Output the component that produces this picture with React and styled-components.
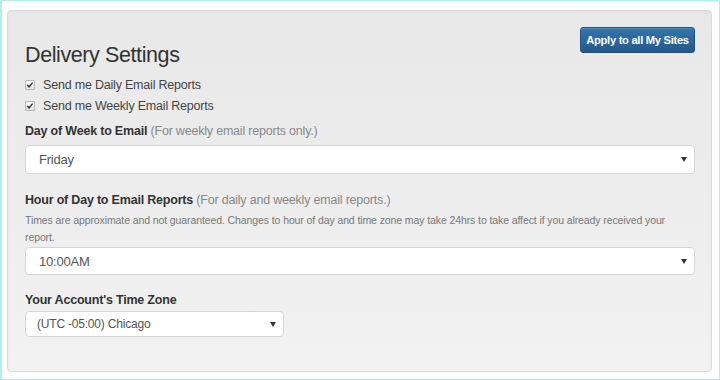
import React from "react";
import styled, { createGlobalStyle } from "styled-components";

const GlobalStyle = createGlobalStyle`
    html, body {
        margin: 0;
        padding: 0;
        background: #ffffff;
    }
    body {
        font-family: "Liberation Sans", Arial, Helvetica, sans-serif;
        color: #333333;
    }
`;

const Frame = styled.div`
    box-sizing: border-box;
    width: 720px;
    height: 380px;
    border: 1px solid #b6ecec;
    border-left-width: 2px;
    padding: 9px 7px 7px 5px;
    display: flex;
`;

const Panel = styled.div`
    box-sizing: border-box;
    flex: 1;
    border: 1px solid #dadada;
    border-radius: 4px;
    background: linear-gradient(to bottom, #e8e8e8 0%, #f2f2f2 100%);
    box-shadow: inset 0 1px 2px rgba(0, 0, 0, 0.04);
    padding: 16px 16px 0 17px;
    display: flex;
    flex-direction: column;
`;

const Header = styled.div`
    display: flex;
    justify-content: space-between;
    align-items: flex-start;
`;

const Title = styled.h3`
    margin: 16px 0 0 0;
    font-size: 21.5px;
    font-weight: 400;
    letter-spacing: -0.4px;
    line-height: 24px;
    color: #333333;
`;

const ApplyButton = styled.button`
    width: 115px;
    height: 26px;
    padding: 0;
    border: 1px solid #23527f;
    border-radius: 3px;
    background: linear-gradient(to bottom, #3474ae 0%, #25598b 100%);
    color: #ffffff;
    font-family: "Liberation Sans", Arial, sans-serif;
    font-size: 11.2px;
    font-weight: 700;
    letter-spacing: -0.3px;
    box-shadow: inset 0 1px 0 rgba(255, 255, 255, 0.15);
`;

const CheckRow = styled.label`
    display: flex;
    align-items: center;
    gap: 8px;
    height: 21px;
    font-size: 12.5px;
    letter-spacing: -0.2px;
    color: #444444;
    margin-top: ${(props) => props.first ? "7px" : "0"};
`;

const Box = styled.span`
    box-sizing: border-box;
    width: 10px;
    height: 10px;
    border: 1px solid #b9b9b9;
    border-radius: 1px;
    background: linear-gradient(to bottom, #fbfbfb, #e4e4e4);
    display: flex;
    align-items: center;
    justify-content: center;
`;

const FieldLabel = styled.div`
    font-size: 12.5px;
    letter-spacing: -0.2px;
    font-weight: 700;
    color: #333333;
    line-height: 16px;
    margin-top: ${(props) => props.top}px;
`;

const Hint = styled.span`
    font-weight: 400;
    color: #888888;
`;

const Help = styled.p`
    max-width: 642px;
    margin: 4px 0 0 0;
    font-size: 10.5px;
    letter-spacing: -0.1px;
    line-height: 17px;
    color: #777777;
`;

const SelectBox = styled.div`
    box-sizing: border-box;
    width: ${(props) => props.narrow ? "259px" : "100%"};
    height: ${(props) => props.h}px;
    margin-top: ${(props) => props.top}px;
    border: 1px solid #d6d6d6;
    border-radius: 4px;
    background: #ffffff;
    display: flex;
    align-items: center;
    justify-content: space-between;
    padding: 0 7px 0 ${(props) => props.narrow ? "11px" : "13px"};
    font-size: ${(props) => props.narrow ? "12px" : "13px"};
    letter-spacing: -0.2px;
    color: #555555;
`;

const Caret = styled.span`
    width: 0;
    height: 0;
    border-left: 3px solid transparent;
    border-right: 3px solid transparent;
    border-top: 5px solid #333333;
`;

function Check () {
    return (
        <Box>
            <svg width="8" height="8" viewBox="0 0 8 8">
                <path d="M1.2 4 L3.1 5.9 L6.6 1.6" fill="none" stroke="#333" strokeWidth="1.5" />
            </svg>
        </Box>
    )
}

function App () {
    return (
        <Frame>
            <GlobalStyle />
            <Panel>
                <Header>
                    <Title>Delivery Settings</Title>
                    <ApplyButton>Apply to all My Sites</ApplyButton>
                </Header>
                <CheckRow first><Check />Send me Daily Email Reports</CheckRow>
                <CheckRow><Check />Send me Weekly Email Reports</CheckRow>
                <FieldLabel top={7}>
                    Day of Week to Email <Hint>(For weekly email reports only.)</Hint>
                </FieldLabel>
                <SelectBox top={6} h={29}>
                    Friday
                    <Caret />
                </SelectBox>
                <FieldLabel top={18}>
                    Hour of Day to Email Reports <Hint>(For daily and weekly email reports.)</Hint>
                </FieldLabel>
                <Help>
                    Times are approximate and not guaranteed. Changes to hour of day and time zone may take 24hrs to take affect if you already received your report.
                </Help>
                <SelectBox top={1} h={28}>
                    10:00AM
                    <Caret />
                </SelectBox>
                <FieldLabel top={17}>Your Account's Time Zone</FieldLabel>
                <SelectBox narrow top={3} h={26}>
                    (UTC -05:00) Chicago
                    <Caret />
                </SelectBox>
            </Panel>
        </Frame>
    )
}

export default App;
